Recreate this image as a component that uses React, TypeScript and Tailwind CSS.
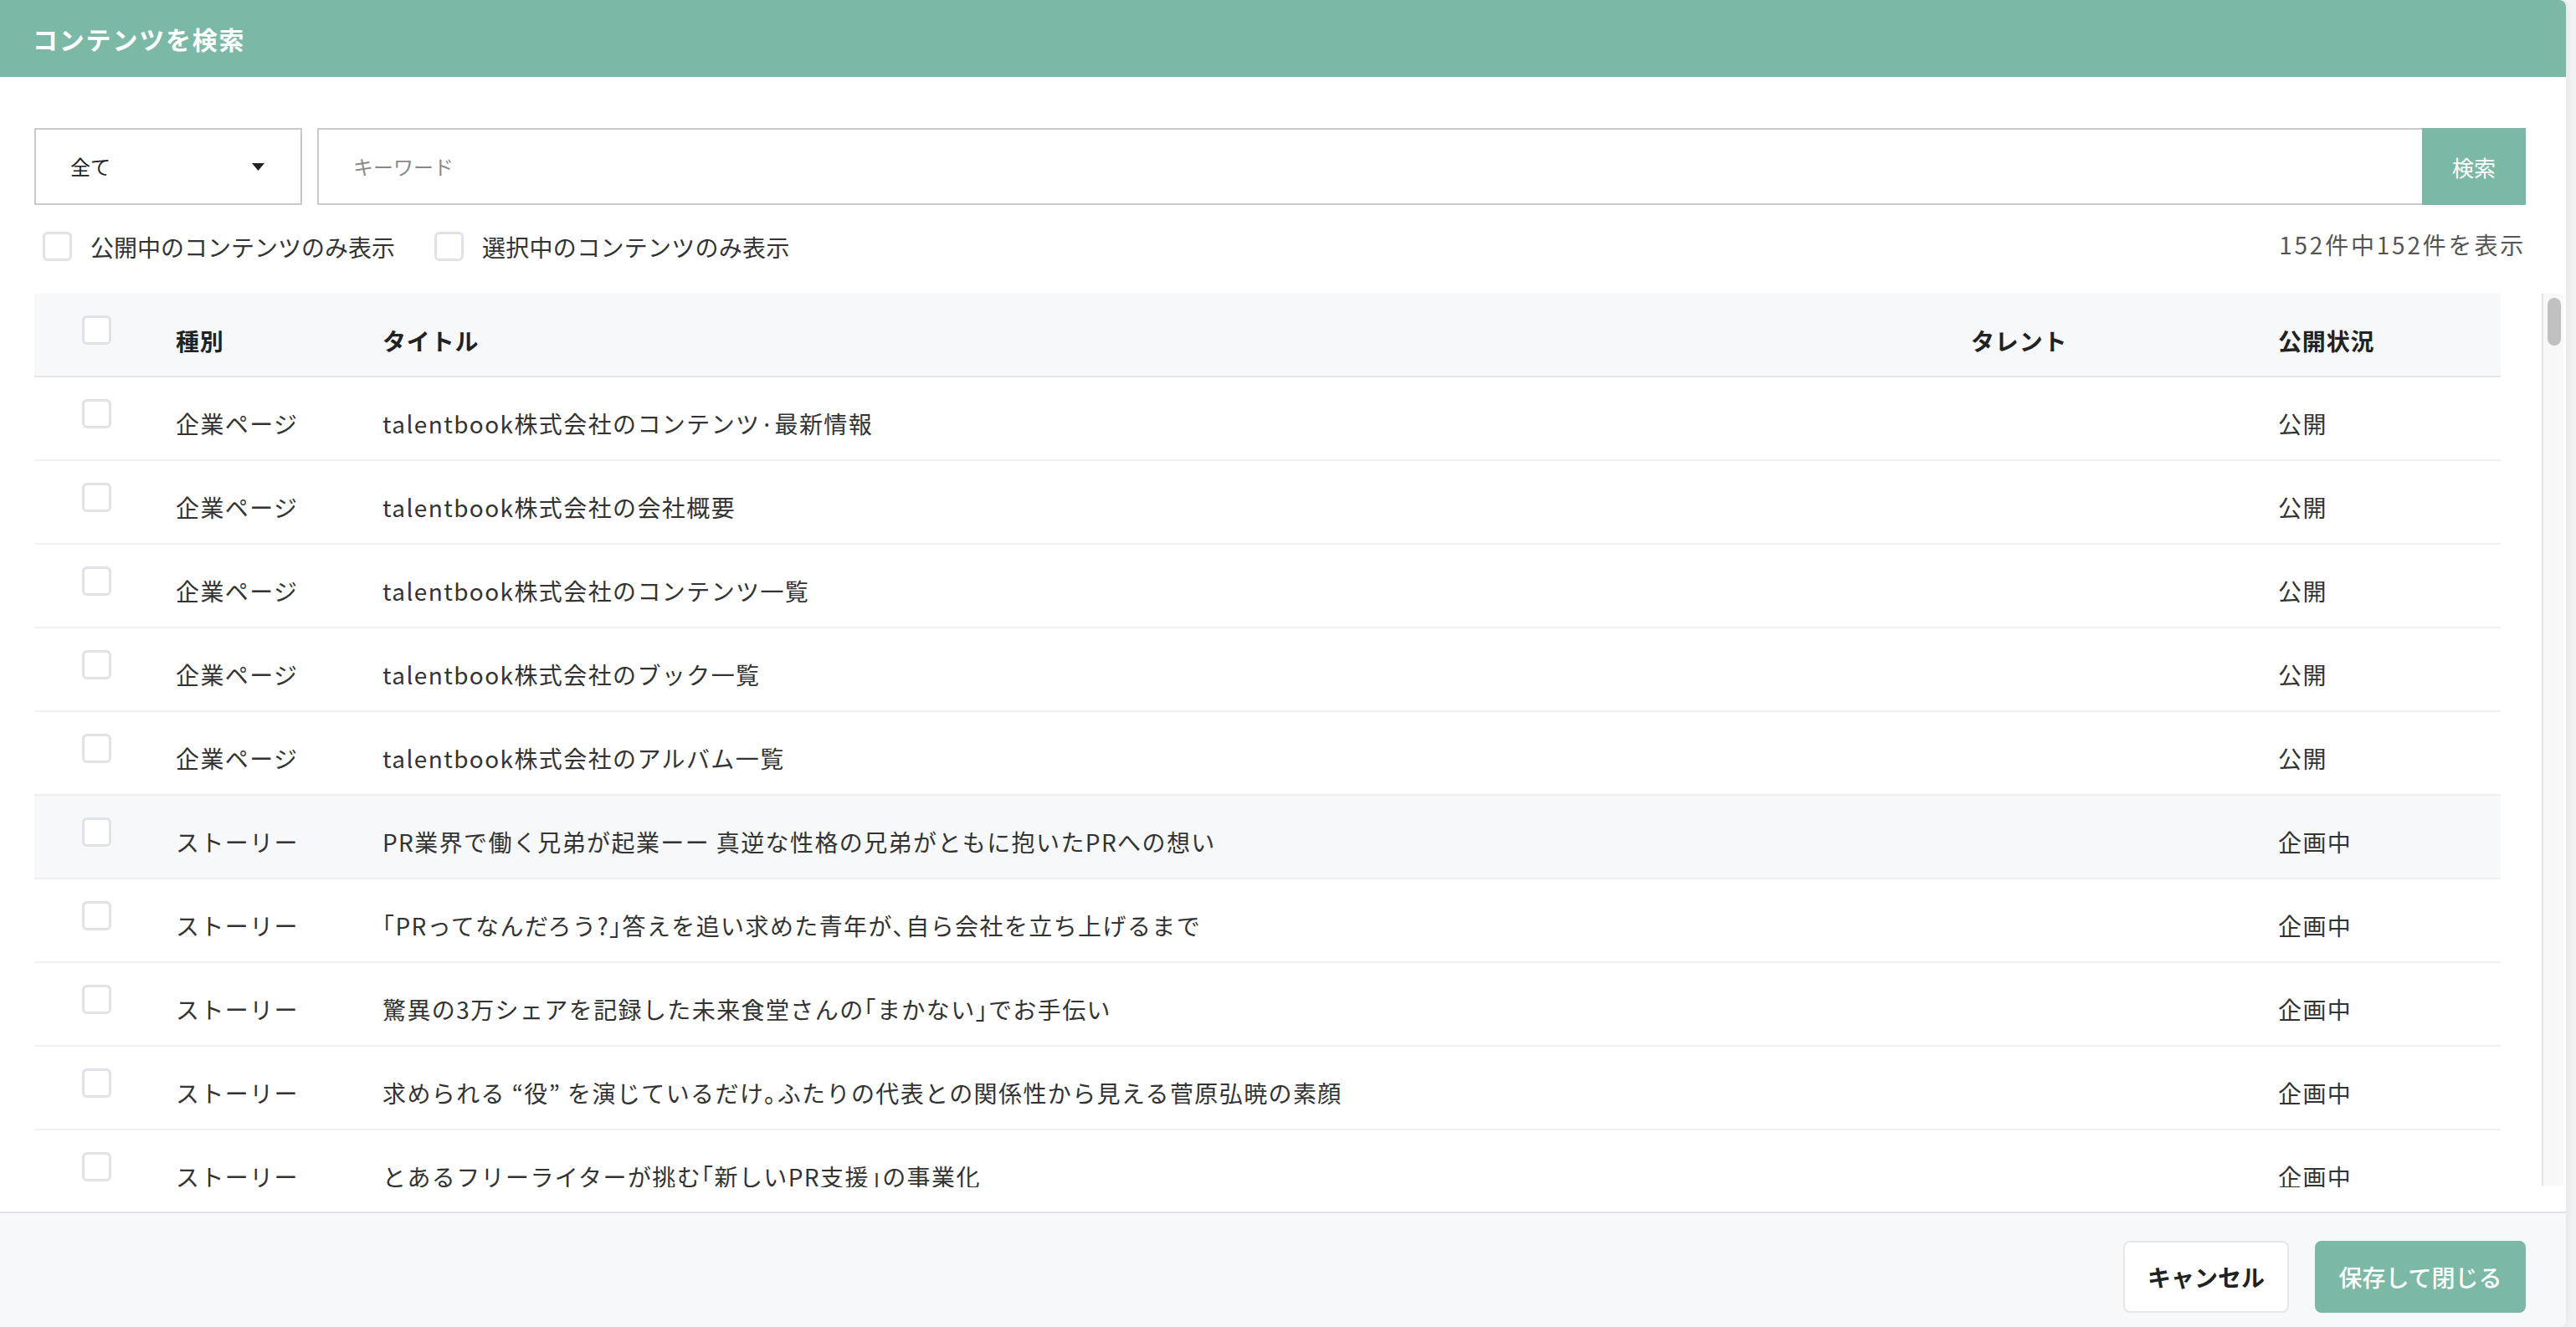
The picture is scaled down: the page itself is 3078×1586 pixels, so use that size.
import React from "react";

const rows = [
  { type: "企業ページ", title: "talentbook株式会社のコンテンツ·最新情報", status: "公開" },
  { type: "企業ページ", title: "talentbook株式会社の会社概要", status: "公開" },
  { type: "企業ページ", title: "talentbook株式会社のコンテンツ一覧", status: "公開" },
  { type: "企業ページ", title: "talentbook株式会社のブック一覧", status: "公開" },
  { type: "企業ページ", title: "talentbook株式会社のアルバム一覧", status: "公開" },
  { type: "ストーリー", title: "PR業界で働く兄弟が起業ーー 真逆な性格の兄弟がともに抱いたPRへの想い", status: "企画中", hover: true },
  { type: "ストーリー", title: "｢PRってなんだろう?｣答えを追い求めた青年が､自ら会社を立ち上げるまで", status: "企画中" },
  { type: "ストーリー", title: "驚異の3万シェアを記録した未来食堂さんの｢まかない｣でお手伝い", status: "企画中" },
  { type: "ストーリー", title: "求められる “役” を演じているだけ｡ふたりの代表との関係性から見える菅原弘暁の素顔", status: "企画中" },
  { type: "ストーリー", title: "とあるフリーライターが挑む｢新しいPR支援｣の事業化", status: "企画中" },
];

const Box = () => (
  <div className="w-[35px] h-[35px] rounded-[6px] border-[3px] border-[#e1e2e8] bg-white shrink-0" />
);

const gridCols = "grid grid-cols-[169px_247px_1898px_367px_1fr]";

export default function App() {
  return (
    <div className="w-[3078px] h-[1586px] bg-[#f2f3f5] overflow-hidden font-['Noto_Sans_CJK_JP','Noto_Sans',sans-serif]">
      <div className="w-[3066px] h-full bg-white rounded-r-[8px] overflow-hidden flex flex-col shadow-[0_0_14px_rgba(0,0,0,0.08)]">
        {/* ヘッダー */}
        <div className="h-[92px] shrink-0 bg-[#7bb9a6] flex items-center pl-[39px]">
          <h1 className="text-white text-[30px] font-bold tracking-[0.06em]">コンテンツを検索</h1>
        </div>

        {/* 検索 */}
        <div className="mt-[61px] ml-[41px] mr-[48px] flex h-[92px] gap-[18px]">
          <div className="w-[320px] border-2 border-[#c9c9c9] flex items-center justify-between pl-[41px] pr-[43px]">
            <span className="text-[24px] text-[#222]">全て</span>
            <svg width="15" height="9" viewBox="0 0 15 9">
              <path d="M0 0 L15 0 L7.5 9 Z" fill="#222" />
            </svg>
          </div>
          <div className="flex-1 flex">
            <div className="flex-1 border-y-2 border-l-2 border-[#c9c9c9] flex items-center pl-[41px]">
              <span className="text-[24px] text-[#8a8a8a]">キーワード</span>
            </div>
            <button className="w-[124px] h-full bg-[#7bb9a6] text-white text-[26px]">検索</button>
          </div>
        </div>

        {/* フィルタ */}
        <div className="mt-[32px] ml-[51px] mr-[48px] h-[35px] flex items-center justify-between">
          <div className="flex items-center">
            <Box />
            <span className="ml-[22px] text-[28px] text-[#333]">公開中のコンテンツのみ表示</span>
            <div className="ml-[47px]">
              <Box />
            </div>
            <span className="ml-[22px] text-[28px] text-[#333] tracking-[0.01em]">選択中のコンテンツのみ表示</span>
          </div>
          <span className="text-[28px] text-[#555] tracking-[0.1em] -mt-[6px]">152件中152件を表示</span>
        </div>

        {/* テーブル */}
        <div className="mt-[39px] ml-[41px] mr-[3px] h-[1068px] flex shrink-0">
          <div className="w-[2947px] overflow-hidden">
            <div className={`${gridCols} h-[100px] bg-[#f7f8fa] border-b-2 border-[#e3e5ea] text-[28px] font-bold text-[#222] tracking-[0.03em]`}>
              <div className="pl-[57px] pt-[26px]">
                <Box />
              </div>
              <div className="flex items-center pt-[13px]">種別</div>
              <div className="flex items-center pt-[13px]">タイトル</div>
              <div className="flex items-center pt-[13px]">タレント</div>
              <div className="flex items-center pt-[13px]">公開状況</div>
            </div>
            {rows.map((r, i) => (
              <div
                key={i}
                className={`${gridCols} h-[100px] shrink-0 border-b-2 border-[#eef0f2] text-[28px] text-[#333] tracking-[0.05em] ${
                  r.hover ? "bg-[#f7f8fa]" : "bg-white"
                }`}
              >
                <div className="pl-[57px] pt-[26px]">
                  <Box />
                </div>
                <div className="flex items-center pt-[12px]">{r.type}</div>
                <div className="flex items-center pt-[12px] whitespace-nowrap">{r.title}</div>
                <div className="flex items-center pt-[12px]"></div>
                <div className="flex items-center pt-[12px]">{r.status}</div>
              </div>
            ))}
          </div>
          <div className="ml-auto w-[26px] h-[1066px] border-l-2 border-[#e4e4e4] bg-[#f8f8f8] pl-[5px] pt-[5px]">
            <div className="w-[16px] h-[57px] rounded-full bg-[#c1c1c1]" />
          </div>
        </div>

        <div className="flex-1" />

        {/* フッター */}
        <div className="h-[138px] shrink-0 bg-[#f7f8fa] border-t-2 border-[#e3e4e9] flex justify-end items-start pt-[33px] pr-[48px] gap-[31px]">
          <button className="w-[198px] h-[86px] bg-white border-2 border-[#e6e6e6] rounded-[8px] text-[28px] font-bold text-[#222]">
            キャンセル
          </button>
          <button className="w-[252px] h-[86px] bg-[#7bb9a6] rounded-[8px] text-[28px] font-medium text-white">
            保存して閉じる
          </button>
        </div>
      </div>
    </div>
  );
}
